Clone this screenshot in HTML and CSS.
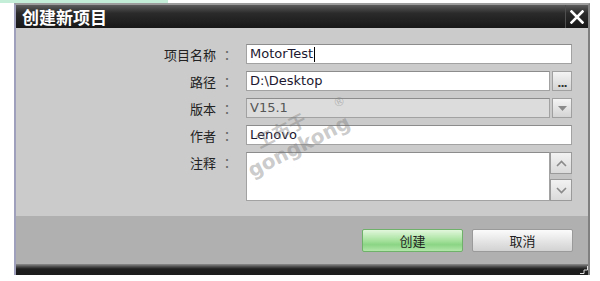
FILE: index.html
```html
<!DOCTYPE html>
<html>
	<head>
		<meta charset="UTF-8">
		<title>创建新项目</title>
		<link rel="stylesheet" href="styles.css">
	</head>
	<body>
		<div class="strip"></div>
		<div class="dialog">
			<div class="titlebar">
				<span class="title">创建新项目</span>
				<span class="close">
					<svg width="14" height="14" viewBox="0 0 14 14"><path d="M1.5 1.5 L12.5 12.5 M12.5 1.5 L1.5 12.5" stroke="#fff" stroke-width="2.6" stroke-linecap="square"/></svg>
				</span>
			</div>
			<div class="body">
				<div class="form">
					<div class="lbl">项目名称<span class="colon">：</span></div>
					<div class="field"><div class="input">MotorTest<span class="caret"></span></div></div>

					<div class="lbl">路径<span class="colon">：</span></div>
					<div class="field">
						<div class="input">D:\Desktop</div>
						<div class="sidebtn dots">...</div>
					</div>

					<div class="lbl">版本<span class="colon">：</span></div>
					<div class="field">
						<div class="input disabled">V15.1</div>
						<div class="sidebtn">
							<svg width="9" height="5" viewBox="0 0 9 5"><path d="M0 0 L9 0 L4.5 5 Z" fill="#8a8a8a"/></svg>
						</div>
					</div>

					<div class="lbl">作者<span class="colon">：</span></div>
					<div class="field"><div class="input">Lenovo</div></div>

					<div class="lbl lbl-top">注释<span class="colon">：</span></div>
					<div class="field memo">
						<div class="input area"></div>
						<div class="scroll">
							<div class="arrow">
								<svg width="11" height="7" viewBox="0 0 11 7"><path d="M1 6 L5.5 1.5 L10 6" fill="none" stroke="#8a8a8a" stroke-width="1.6"/></svg>
							</div>
							<div class="arrow">
								<svg width="11" height="7" viewBox="0 0 11 7"><path d="M1 1 L5.5 5.5 L10 1" fill="none" stroke="#8a8a8a" stroke-width="1.6"/></svg>
							</div>
						</div>
					</div>
				</div>
				<div class="watermark">
					<span class="wm-cn">工布于</span>
					<span class="wm-en">gongkong</span>
					<span class="wm-r">®</span>
				</div>
			</div>
			<div class="footer">
				<button class="btn ok">创建</button>
				<button class="btn">取消</button>
			</div>
			<div class="bottom">
				<svg class="grip" width="8" height="8" viewBox="0 0 8 8"><path d="M7.5 0 V4 H4 V7.5 H0" fill="none" stroke="#e0e0e0" stroke-width="1"/></svg>
			</div>
		</div>
	</body>
</html>
```

FILE: styles.css
```css
*{margin:0;padding:0;box-sizing:border-box;}
body{
	background:#fff;
	font-family:"Noto Sans CJK SC", sans-serif;
	font-size:13px;
	color:#222;
}
.strip{
	width:168px;
	height:3px;
	background:#c4eed8;
}
.dialog{
	width:576px;
	margin-left:14px;
	border-top:2px solid #9d9d9d;
	border-left:2px solid #9ea0bc;
	border-right:2px solid #808080;
}
.titlebar{
	height:23px;
	display:flex;
	align-items:center;
	justify-content:space-between;
	background:linear-gradient(#5c5c5c 0, #2b2b2b 35%, #171717 100%);
}
.title{
	color:#fff;
	font-weight:bold;
	font-size:17px;
	padding-left:6px;
	line-height:23px;
}
.close{
	width:23px;
	height:23px;
	display:flex;
	align-items:center;
	justify-content:center;
	border-left:1px solid #4e4e4e;
}
.body{
	position:relative;
	height:188px;
	background:#cbcbcb;
	padding-top:16px;
}
.form{
	display:grid;
	grid-template-columns:230px 326px;
	grid-auto-rows:20px;
	row-gap:7px;
}
.form .memo{grid-row:span 2;height:49px;}
.lbl{
	display:flex;
	justify-content:flex-end;
	align-items:center;
	padding-right:8px;
	font-size:13px;
	color:#222;
}
.lbl-top{align-items:flex-start;padding-top:1px;}
.colon{
	width:22px;
	text-align:center;
	color:#666;
	font-family:"Noto Sans CJK JP", sans-serif;
}
.field{
	display:flex;
	gap:2px;
}
.input{
	flex:1;
	height:20px;
	background:#fff;
	border:1px solid #a2a2a2;
	border-top-color:#8c8c8c;
	padding-left:3px;
	font-family:"DejaVu Sans", sans-serif;
	font-size:13px;
	line-height:18px;
	color:#1c1830;
	display:flex;
	align-items:center;
}
.input.disabled{
	background:#dcdcdc;
	color:#555;
}
.caret{
	width:1px;
	height:15px;
	background:#000;
	margin-left:1px;
}
.sidebtn{
	width:20px;
	height:20px;
	border:1px solid #a0a0a0;
	background:linear-gradient(#f4f4f4, #d4d4d4);
	display:flex;
	align-items:center;
	justify-content:center;
}
.dots{
	align-items:flex-end;
	font-family:"DejaVu Sans", sans-serif;
	font-weight:bold;
	font-size:11px;
	line-height:12px;
	letter-spacing:-1px;
	color:#333;
}
.area{height:49px;}
.scroll{
	width:22px;
	height:49px;
	margin-left:-2px;
	background:#c4c4c4;
	display:flex;
	flex-direction:column;
	justify-content:space-between;
}
.arrow{
	height:22px;
	border:1px solid #9a9a9a;
	background:linear-gradient(#f2f2f2, #dadada);
	display:flex;
	align-items:center;
	justify-content:center;
}
.watermark{
	position:absolute;
	left:226px;
	top:74px;
	width:130px;
	height:80px;
	transform:rotate(-27deg);
	color:rgba(120,120,120,0.4);
	font-family:"DejaVu Sans", sans-serif;
	font-weight:bold;
	pointer-events:none;
}
.wm-cn{
	position:absolute;
	left:20px;
	top:4px;
	font-family:"Noto Sans CJK SC", sans-serif;
	font-size:18px;
}
.wm-en{
	position:absolute;
	left:0;
	top:28px;
	font-size:20px;
}
.wm-r{
	position:absolute;
	left:106px;
	top:12px;
	font-size:12px;
	font-weight:normal;
}
.footer{
	height:48px;
	background:#b0b0b0;
	display:flex;
	justify-content:flex-end;
	gap:9px;
	padding:13px 15px 0 0;
}
.btn{
	width:101px;
	height:23px;
	border:1px solid #9a9a9a;
	border-radius:2px;
	background:linear-gradient(#fbfbfb, #e2e2e2 60%, #d2d2d2);
	font-family:"Noto Sans CJK SC", sans-serif;
	font-size:13px;
	color:#222;
}
.btn.ok{
	border-color:#6fb06a;
	background:linear-gradient(#e2f7dc, #a6e29d 50%, #8bd585 70%, #b2e6aa);
}
.bottom{
	position:relative;
	height:11px;
	background:linear-gradient(#8c8c8c 0, #4a4a4a 25%, #1e1e1e 45%, #1c1c1c 100%);
}
.grip{
	position:absolute;
	right:0;
	bottom:1px;
}
```
